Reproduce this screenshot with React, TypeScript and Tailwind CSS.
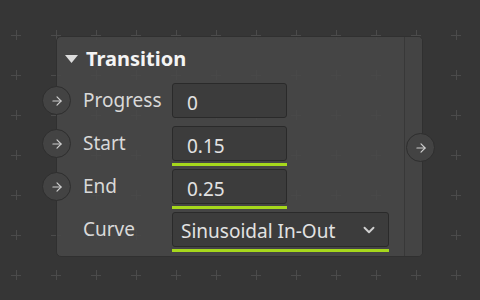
import React from 'react';
import { ArrowRight, ChevronDown } from 'lucide-react';

interface RowProps {
  label: string;
  port?: boolean;
  underline?: boolean;
  children: React.ReactNode;
}

const Port = () => (
  <div className="w-[29px] h-[29px] rounded-full bg-[#434343] border border-[#2e2e2e] flex items-center justify-center shrink-0">
    <ArrowRight size={14} strokeWidth={2} className="text-[#cfcfcf]" />
  </div>
);

const Row = ({ label, port, underline, children }: RowProps) => (
  <div className="flex h-[43px] pt-[2px]">
    <div className="w-[26px] h-[35px] flex items-center shrink-0">
      {port && (
        <div className="-ml-[15px]">
          <Port />
        </div>
      )}
    </div>
    <div className="w-[89px] h-[35px] flex items-center text-[19px] text-[#d9d9d9] shrink-0">
      {label}
    </div>
    <div className="flex flex-col">
      {children}
      {underline && <div className="mt-[2px] h-[3px] bg-[#a6d81c]" />}
    </div>
  </div>
);

const Field = ({ value }: { value: string }) => (
  <div className="w-[115px] h-[35px] rounded-[3px] bg-[#3c3c3c] border border-[#2a2a2a] pl-[14px] pt-[6px] flex items-center text-[19px] text-[#e2e2e2]">
    {value}
  </div>
);

const App = () => {
  return (
    <div
      className="relative w-[480px] h-[300px] overflow-hidden bg-[#363636]"
      style={{ fontFamily: '"Noto Sans", "Open Sans", sans-serif' }}
    >
      <svg className="absolute inset-0" width="480" height="300">
        <defs>
          <pattern id="grid" width="40" height="40" patternUnits="userSpaceOnUse">
            <path d="M11 35.5H21M16.5 30V40" stroke="#4b4b4b" strokeWidth="1" />
          </pattern>
        </defs>
        <rect width="480" height="300" fill="url(#grid)" />
      </svg>

      <div className="relative ml-[56px] mt-[36px] w-[367px] h-[221px] flex rounded-[5px] border border-[#303030] bg-[rgba(72,72,72,0.88)]">
        <div className="flex flex-col w-[347px]">
          <div className="h-[44px] flex items-center pl-[8px] gap-[8px]">
            <svg width="13" height="8" viewBox="0 0 13 8">
              <path d="M0 0H13L6.5 8Z" fill="#dcdcdc" />
            </svg>
            <span className="text-[20px] font-bold text-[#f4f4f4] leading-none">Transition</span>
          </div>
          <Row label="Progress" port>
            <Field value="0" />
          </Row>
          <Row label="Start" port underline>
            <Field value="0.15" />
          </Row>
          <Row label="End" port underline>
            <Field value="0.25" />
          </Row>
          <Row label="Curve" underline>
            <div className="w-[217px] h-[35px] rounded-[3px] bg-[#3c3c3c] border border-[#2a2a2a] pl-[8px] pr-[10px] flex items-center justify-between text-[19px] text-[#e2e2e2]">
              <span className="pt-[3px]">Sinusoidal In-Out</span>
              <ChevronDown size={18} strokeWidth={2.5} className="text-[#d0d0d0]" />
            </div>
          </Row>
        </div>
        <div className="flex-1 border-l border-[#383838] bg-[#444444] rounded-r-[4px] flex items-center justify-end">
          <div className="-mr-[13px] mt-[2px]">
            <Port />
          </div>
        </div>
      </div>
    </div>
  );
};

export default App;
